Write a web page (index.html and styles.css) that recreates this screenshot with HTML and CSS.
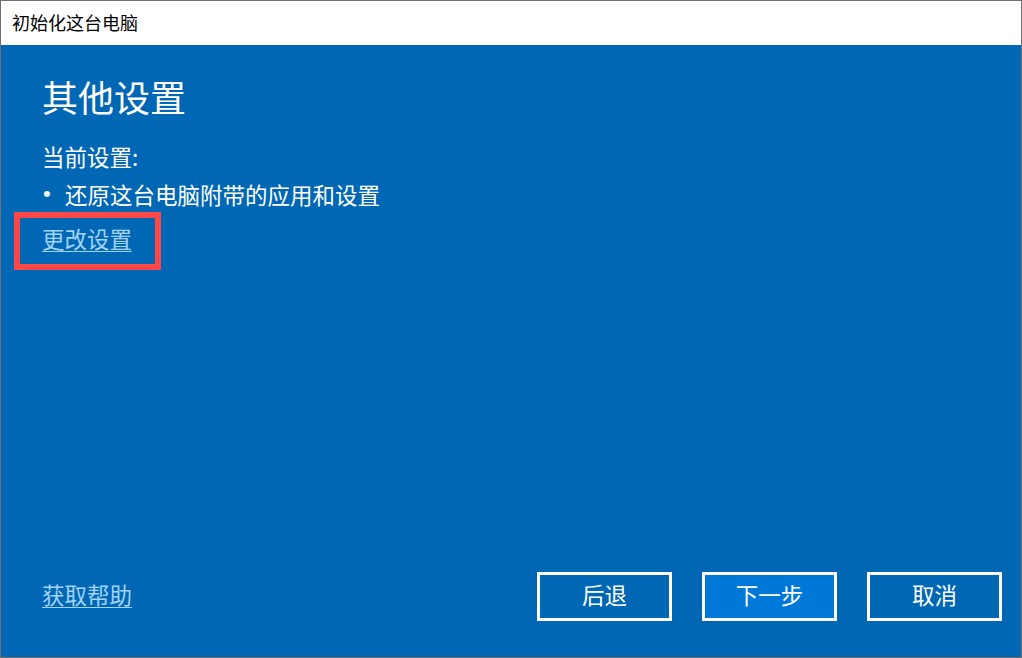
FILE: index.html
```html
<!DOCTYPE html>
<html lang="zh-CN">
<head>
<meta charset="utf-8">
<title>初始化这台电脑</title>
<link rel="stylesheet" href="styles.css">
</head>
<body>
<div class="window">
  <div class="titlebar">初始化这台电脑</div>
  <div class="content">
    <div class="main">
      <h1 class="heading">其他设置</h1>
      <div class="line">当前设置:</div>
      <div class="line bullet-line"><span class="bullet">•</span><span>还原这台电脑附带的应用和设置</span></div>
      <div class="link-line">
        <a class="link" href="#">更改设置</a>
        <span class="highlight"></span>
      </div>
    </div>
    <div class="footer">
      <a class="link help" href="#">获取帮助</a>
      <div class="buttons">
        <button class="btn">后退</button>
        <button class="btn btn-primary">下一步</button>
        <button class="btn">取消</button>
      </div>
    </div>
  </div>
</div>
</body>
</html>
```
FILE: styles.css
```css
* { box-sizing: border-box; }
html, body { margin: 0; padding: 0; }
body {
  width: 1022px;
  height: 658px;
  overflow: hidden;
  font-family: "Noto Sans CJK SC", "Noto Sans", sans-serif;
  background: #ffffff;
}
.window {
  width: 1022px;
  height: 658px;
  border: 1px solid #707070;
  display: flex;
  flex-direction: column;
}
.titlebar {
  height: 44px;
  line-height: 42px;
  padding-left: 11px;
  font-size: 18px;
  color: #000;
  background: #fff;
  flex: none;
}
.content {
  flex: 1;
  background: #0067b4;
  color: #fff;
  display: flex;
  flex-direction: column;
  padding: 27px 19px 36px 41px;
}
.main {
  flex: 1;
  display: flex;
  flex-direction: column;
}
.heading {
  margin: 0 0 17px 0;
  font-size: 36px;
  font-weight: normal;
  line-height: 48px;
}
.line {
  font-size: 22.5px;
  line-height: 38px;
}
.bullet-line { display: flex; }
.bullet {
  width: 23px;
  padding-left: 1px;
  font-family: "Liberation Sans", sans-serif;
  font-size: 22px;
}
.link-line {
  position: relative;
  margin-top: 6px;
  font-size: 22.5px;
  line-height: 38px;
  align-self: flex-start;
}
.link {
  color: #a3d3fa;
  text-decoration: underline;
  text-underline-offset: 3px;
  text-decoration-thickness: 1px;
  font-size: 22.5px;
}
.highlight {
  position: absolute;
  left: -28px;
  top: -7px;
  width: 147px;
  height: 58px;
  border: 6px solid #ff4747;
}
.footer {
  display: flex;
  align-items: center;
  justify-content: space-between;
}
.help {
  margin-bottom: 6px;
}
.buttons {
  display: flex;
  gap: 30px;
}
.btn {
  width: 135px;
  height: 49px;
  border: 3px solid #fff;
  background: transparent;
  color: #fff;
  font-family: "Noto Sans CJK SC", "Noto Sans", sans-serif;
  font-size: 22.5px;
  padding: 0 0 5px 0;
}
.btn-primary {
  background: #0078d7;
}
```
